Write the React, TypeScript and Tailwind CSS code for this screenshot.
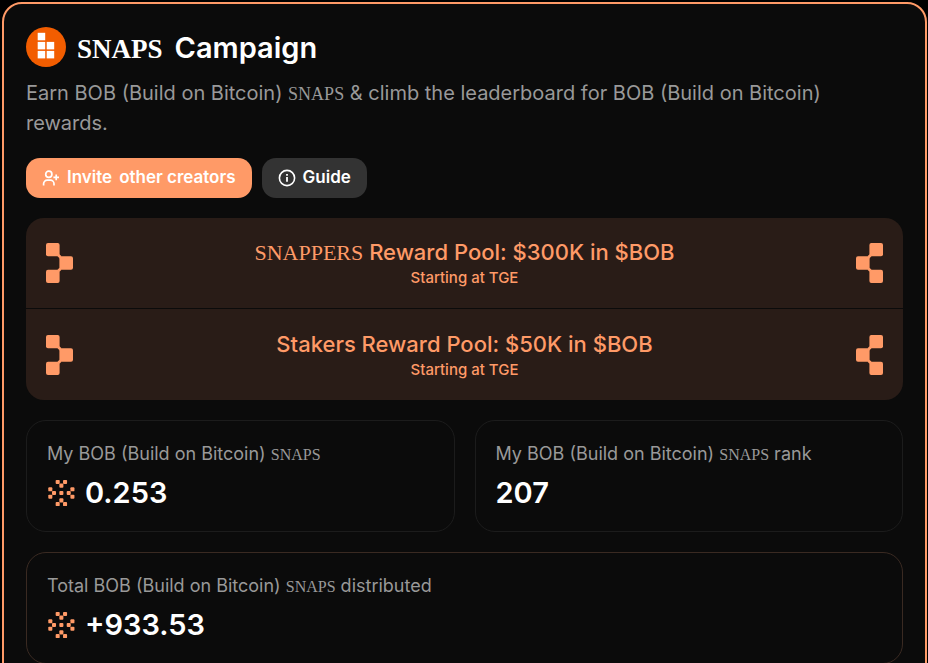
import type { ReactNode } from "react";

interface Pool {
  id: string;
  title: ReactNode;
  note: string;
}

interface StatCardProps {
  label: ReactNode;
  value: string;
  hasIcon?: boolean;
  className?: string;
}

const Snaps = ({ children = "SNAPS", className = "" }: { children?: ReactNode; className?: string }) => (
  <span className={`font-['Liberation_Serif',serif] leading-none ${className}`}>{children}</span>
);

const pools: Pool[] = [
  {
    id: "snappers",
    title: (
      <>
        <Snaps>SNAPPERS</Snaps> Reward Pool: $300K in $BOB
      </>
    ),
    note: "Starting at TGE",
  },
  {
    id: "stakers",
    title: "Stakers Reward Pool: $50K in $BOB",
    note: "Starting at TGE",
  },
];

const BobLogo = () => (
  <svg className="size-10 shrink-0" viewBox="0 0 40 40" aria-hidden="true">
    <circle cx="20" cy="20" r="20" fill="#f25d00" />
    <g fill="#fff">
      <rect x="11.7" y="5.8" width="7.5" height="7.5" />
      <rect x="11.7" y="14.9" width="7.5" height="7.5" />
      <rect x="20.7" y="14.9" width="7.5" height="7.5" />
      <rect x="11.7" y="23.9" width="7.5" height="7.5" />
      <rect x="20.7" y="23.9" width="7.5" height="7.5" />
    </g>
  </svg>
);

const InviteIcon = () => (
  <svg className="h-4 w-[18px]" viewBox="0 0 18 16" fill="none" stroke="currentColor" strokeWidth="1.7" aria-hidden="true">
    <circle cx="6.8" cy="4.2" r="3.1" />
    <path d="M1.6 15.5v-1.7a3.6 3.6 0 0 1 3.6-3.6h3.2a3.6 3.6 0 0 1 3.6 3.6v1.7" />
    <path d="M14.2 4.6v5.6M11.4 7.4H17" />
  </svg>
);

const InfoIcon = () => (
  <svg className="size-[18px]" viewBox="0 0 18 18" fill="none" stroke="currentColor" strokeWidth="1.6" aria-hidden="true">
    <circle cx="9" cy="9" r="7.6" />
    <path d="M9 8v4.8M9 5v1.7" strokeWidth="1.8" />
  </svg>
);

const PoolIcon = ({ className = "" }: { className?: string }) => (
  <svg className={`h-10 w-[27px] shrink-0 ${className}`} viewBox="0 0 27 40" fill="#ff9a67" aria-hidden="true">
    <rect width="13.6" height="13.3" rx="2" />
    <rect x="13.4" y="13.3" width="13.6" height="13.4" rx="2" />
    <rect y="26.7" width="13.6" height="13.3" rx="2" />
    <path d="M13.5 11.3l2 2-2 2-2-2zM13.5 24.7l2 2-2 2-2-2z" />
  </svg>
);

const sparkCells = [
  [2, 0], [4, 0], [3, 1], [0, 2], [6, 2], [1, 3], [3, 3],
  [5, 3], [0, 4], [6, 4], [3, 5], [2, 6], [4, 6],
];

const SparkIcon = () => (
  <svg className="size-7 shrink-0" viewBox="-0.4 -0.3 7.6 7.6" fill="#ff9a67" aria-hidden="true">
    {sparkCells.map(([x, y]) => (
      <rect key={`${x}-${y}`} x={x - 0.05} y={y - 0.05} width="1.1" height="1.1" rx="0.25" />
    ))}
  </svg>
);

const StatCard = ({ label, value, hasIcon, className = "border-[#1c1c1c]" }: StatCardProps) => (
  <div className={`rounded-[20px] border px-5 pt-[19px] pb-[18px] ${className}`}>
    <p className="text-[18px] leading-7 text-[#999]">{label}</p>
    <div className="mt-[5px] flex items-center gap-[10px]">
      {hasIcon && <SparkIcon />}
      <span className="text-[29px] leading-10 font-semibold text-white">{value}</span>
    </div>
  </div>
);

export default function App() {
  return (
    <main className="h-screen overflow-hidden bg-black pt-[2px] pr-px pl-[2px] font-['Inter',sans-serif]">
      <section className="flex min-h-[760px] flex-col gap-5 rounded-[20px] border-2 border-[#ff9a67] bg-[#0b0b0b] p-[22px]">
        <header>
          <div className="flex h-[42px] items-center gap-[11px]">
            <BobLogo />
            <h1 className="flex items-baseline gap-3 pt-[2px] text-[29px] leading-10 font-semibold text-white">
              <Snaps className="text-[27px]" />
              <span>Campaign</span>
            </h1>
          </div>
          <p className="mt-[10px] text-[20px] leading-[30px] text-[#999]">
            Earn BOB (Build on Bitcoin) <Snaps className="text-[18px]" /> &amp; climb the leaderboard for BOB (Build on
            Bitcoin) rewards.
          </p>
        </header>

        <div className="flex gap-[10px]">
          <button
            type="button"
            className="flex h-10 items-center gap-[7px] rounded-[14px] bg-[#ff9a67] px-4 text-[17px] font-semibold text-white"
          >
            <InviteIcon />
            <span className="flex gap-[7px]">
              <span>Invite</span>
              <span>other creators</span>
            </span>
          </button>
          <button
            type="button"
            className="flex h-10 items-center gap-[7px] rounded-[14px] bg-[#333] px-4 text-[17px] font-semibold text-white"
          >
            <InfoIcon />
            Guide
          </button>
        </div>

        <div className="divide-y divide-[#0b0b0b] overflow-hidden rounded-[18px] bg-[#291c17] text-[#ff9a67]">
          {pools.map((pool) => (
            <div key={pool.id} className="flex min-h-[91px] items-center justify-between px-5 py-[19px]">
              <PoolIcon />
              <div className="text-center">
                <h2 className="text-[22px] leading-[30px] font-medium">{pool.title}</h2>
                <p className="text-[15px] leading-[22px] font-medium">{pool.note}</p>
              </div>
              <PoolIcon className="-scale-x-100" />
            </div>
          ))}
        </div>

        <div className="grid grid-cols-2 gap-5">
          <StatCard
            label={
              <>
                My BOB (Build on Bitcoin) <Snaps className="text-[16px]" />
              </>
            }
            value="0.253"
            hasIcon
          />
          <StatCard
            label={
              <>
                My BOB (Build on Bitcoin) <Snaps className="text-[16px]" /> rank
              </>
            }
            value="207"
          />
        </div>

        <StatCard
          className="border-[#3a2a22]"
          label={
            <>
              Total BOB (Build on Bitcoin) <Snaps className="text-[16px]" /> distributed
            </>
          }
          value="+933.53"
          hasIcon
        />
      </section>
    </main>
  );
}
